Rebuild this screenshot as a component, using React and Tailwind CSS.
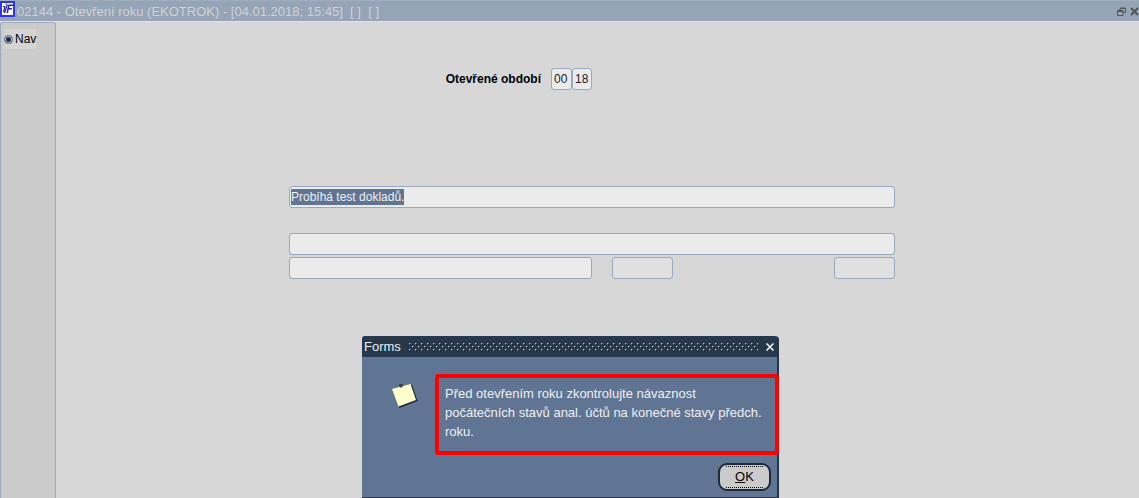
import React, { useState } from 'react';

const FIELD = 'border border-[#9aa9bd] rounded-[3px] text-[12px] leading-[16px] text-[#222] outline-none min-w-0';

const AppLogo = () => (
  <svg width="16" height="16" viewBox="0 0 16 16" aria-hidden="true" className="shrink-0">
    <rect x="1" y="1" width="13" height="14" fill="#fff" stroke="#3333ee" strokeWidth="2" />
    <path d="M3 5.500h2.500M5 5.500L3.500 11M5.500 3h1.500M7.500 3.500L4.500 12" fill="none" stroke="#2323b4" strokeWidth="1.200" />
    <path d="M8.500 4.200H13M9 4L7.200 12M8.500 7.800h3.500" fill="none" stroke="#2323b4" strokeWidth="1.500" />
  </svg>
);

const NoteIcon = () => (
  <svg width="26" height="28" viewBox="0 0 26 28" aria-hidden="true" className="shrink-0">
    <path d="M1.500 8L20 3L25.500 19L7.500 26Z" fill="#1c2530" />
    <path d="M0 7L18.500 2L24 18L6.500 24.500Z" fill="#ffffcc" />
    <path d="M7 2h4v2l-2 2-2-2z" fill="#3c4552" />
  </svg>
);

const DotStrip = () => (
  <svg height="8" aria-hidden="true" className="flex-1 min-w-0" shapeRendering="crispEdges">
    <defs>
      <pattern id="dots" width="6" height="6" patternUnits="userSpaceOnUse">
        <path d="M1 1h1v1h-1zM4 4h1v1h-1z" fill="#0c1420" />
        <path d="M0 0h1v1h-1zM3 3h1v1h-1z" fill="#c6ced8" />
        <path d="M1 0h1v1h-1zM0 1h1v1h-1zM4 3h1v1h-1zM3 4h1v1h-1z" fill="#5b6b80" />
      </pattern>
    </defs>
    <rect width="100%" height="8" fill="url(#dots)" />
  </svg>
);

const TitleBar = () => (
  <header className="flex items-start h-[21px] bg-[#95a4b7] border-t border-[#9fadbe] text-[#d2d2d2]">
    <AppLogo />
    <h1 className="flex-1 pl-px text-[13px] leading-[21px] whitespace-pre">02144 - Otevření roku (EKOTROK) - [04.01.2018; 15:45]  [ ]  [ ]</h1>
    <div className="flex items-center gap-1 h-5 text-[#555]">
      <button type="button" aria-label="Obnovit">
        <svg width="9" height="9" viewBox="0 0 9 9" fill="none" stroke="currentColor">
          <path d="M3 3V1h5.500v4.500H6.500M.5 3.500h5.500v5H.5zM.5 4.500h5.500M3 1.500h5.500" />
        </svg>
      </button>
      <button type="button" aria-label="Zavřít">
        <svg width="9" height="9" viewBox="0 0 9 9" fill="none" stroke="currentColor" strokeWidth="2">
          <path d="M1 1l7 7M8 1L1 8" />
        </svg>
      </button>
    </div>
  </header>
);

const MessageDialog = ({ onClose }) => (
  <div className="absolute inset-x-0 top-[336px] flex justify-center pl-0.5">
    <div
      role="dialog"
      aria-labelledby="dialog-title"
      className="w-[417px] bg-[#607493] border-r-2 border-b border-[#26364a] rounded-t-[4px] text-[#f0f0f0]"
    >
      <div className="flex items-center gap-2 h-[21px] pl-0.5 pr-[3px] bg-[#27374c] rounded-t-[3px]">
        <h2 id="dialog-title" className="text-[13px] leading-[20px]">Forms</h2>
        <DotStrip />
        <button type="button" aria-label="Zavřít" onClick={onClose}>
          <svg width="8" height="8" viewBox="0 0 8 8" fill="none" stroke="#fff" strokeWidth="1.500">
            <path d="M.5.5l7 7M7.500.5l-7 7" />
          </svg>
        </button>
      </div>
      <div className="flex items-start pt-[17px]">
        <div className="w-[73px] pt-2 pl-[30px]">
          <NoteIcon />
        </div>
        <p className="flex-1 -mr-0.5 h-[81px] border-4 border-[#ff0000] rounded-[3px] pt-1.5 pl-1.5 text-[13px] leading-[19px]">
          Před otevřením roku zkontrolujte návaznost
          <br />
          počátečních stavů anal. účtů na konečné stavy předch.
          <br />
          roku.
        </p>
      </div>
      <div className="flex justify-end pt-2 pb-1.5 pr-1.5">
        <button
          type="button"
          onClick={onClose}
          className="w-[53px] h-[28px] px-1.5 bg-[#cbcbcb] border-2 border-[#1f2a38] rounded-[9px] text-[13px] text-black"
        >
          <span className="flex items-center justify-center h-[22px] border-y border-dotted border-black">
            <span className="underline">O</span>K
          </span>
        </button>
      </div>
    </div>
  </div>
);

const App = () => {
  const [open, setOpen] = useState(true);

  return (
    <div className="relative flex flex-col min-h-screen overflow-hidden bg-[#d7d7d7] font-['Liberation_Sans',Arial,sans-serif]">
      <TitleBar />
      <div className="flex flex-1 border-t border-[#e2e2e2]">
        <nav className="w-[56px] shrink-0 pt-1.5 pl-[3px] bg-[#cbcbcb] border-x border-t border-[#9aa9bd] rounded-t-[3px]">
          <label className="flex items-center gap-0.5 w-8 text-[12px] leading-[20px] text-black bg-[#d4d4d4]">
            <input
              type="radio"
              name="nav"
              defaultChecked
              className="appearance-none shrink-0 size-[9px] rounded-full border border-[#5f7491] bg-[#1c2a3c] ring-1 ring-inset ring-[#cbd3dd]"
            />
            Nav
          </label>
        </nav>

        <main className="flex-1 flex justify-center pt-[46px] pr-[11px]">
          <form className="w-[606px]">
            <div className="flex items-center justify-end w-[303px]">
              <label htmlFor="period" className="mr-2.5 text-[12px] font-bold text-black">Otevřené období</label>
              <input id="period" defaultValue="00" className={`${FIELD} w-[21px] h-[22px] pl-0.5 bg-[#ebebeb]`} />
              <input aria-label="Rok" defaultValue="18" className={`${FIELD} w-[20px] h-[22px] pl-0.5 bg-[#ebebeb]`} />
            </div>

            <div className={`${FIELD} mt-24 h-[22px] pl-px flex items-center bg-[#ebebeb]`}>
              <output className="bg-[#607493] text-[#f0f0f0]">Probíhá test dokladů.</output>
            </div>

            <input aria-label="Průběh" className={`${FIELD} block mt-[25px] w-full h-[22px] bg-[#ebebeb]`} />
            <div className="flex mt-0.5">
              <input aria-label="Stav" className={`${FIELD} w-[303px] h-[22px] bg-[#ebebeb]`} />
              <input aria-label="Počet" readOnly className={`${FIELD} ml-5 w-[61px] h-[22px] bg-[#e0e0e0]`} />
              <input aria-label="Celkem" readOnly className={`${FIELD} ml-auto w-[61px] h-[22px] bg-[#e0e0e0]`} />
            </div>
          </form>
        </main>
      </div>
      {open && <MessageDialog onClose={() => setOpen(false)} />}
    </div>
  );
};

export default App;
